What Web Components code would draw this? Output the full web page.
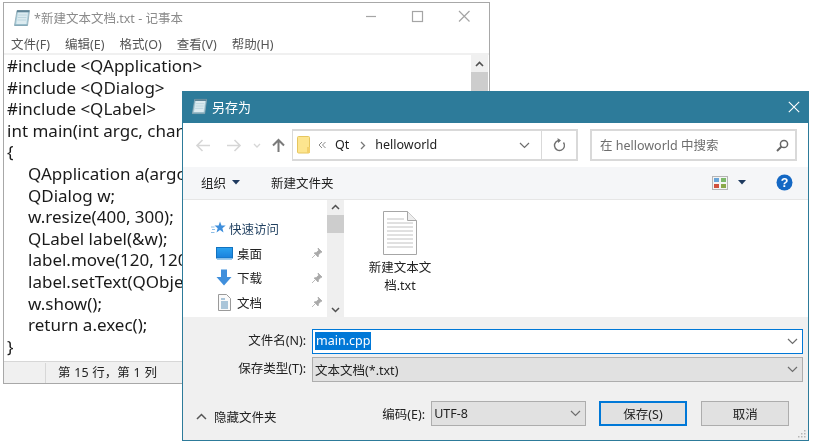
<!DOCTYPE html>
<html lang="zh">
<head>
<meta charset="utf-8">
<title>记事本</title>
<style>
html, body { margin: 0; padding: 0; background: #fff; }
body { width: 813px; height: 443px; overflow: hidden; position: relative; font-family: "Noto Sans", "Noto Sans CJK SC", sans-serif; }
note-pad, save-dialog { filter: blur(.35px); }
</style>
</head>
<body>
<note-pad></note-pad>
<save-dialog></save-dialog>

<script>
const notepadIcon = (w, h) => `
  <svg width="${w}" height="${h}" viewBox="0 0 18 18">
    <path d="M4 1.500h12.500L14.500 16.500H1.500z" fill="#a9cfdd" stroke="#8fa8b2" stroke-width=".8"/>
    <path d="M5 3.200h10L13.300 15.200H3.200z" fill="#dcebf0"/>
    <path d="M4.200 1.200h12.300l-.3 2H3.900z" fill="#5f8496"/>
    <path d="M5.200 6h8.600M4.800 8.500h8.600M4.400 11h8.600" stroke="#b4d0da" stroke-width=".8"/>
    <path d="M1.500 16.800h12.800l.3-1.400H1.800z" fill="#7fa4b4"/>
  </svg>`;

const chevronDown = `<svg width="11" height="7" viewBox="0 0 11 7"><path d="M1 1l4.500 4.500L10 1" fill="none" stroke="#6d6d6d" stroke-width="1.200"/></svg>`;

class NotePad extends HTMLElement {
  connectedCallback() {
    this.attachShadow({ mode: 'open' });
    // only what shows beside the dialog
    const lines = [
      '#include &lt;QApplication&gt;', '#include &lt;QDialog&gt;', '#include &lt;QLabel&gt;',
      'int main(int argc, char', '{',
      '>QApplication a(argc', '>QDialog w;', '>w.resize(400, 300);',
      '>QLabel label(&amp;w);', '>label.move(120, 120',
      '>label.setText(QObje', '>w.show();',
      '>return a.exec();', '}'
    ].map(l => l.replace(/^>/, '<span class="in"></span>'));
    this.shadowRoot.innerHTML = `
      <style>
        :host { position: absolute; left: 3px; top: 2px; width: 487px; height: 382px; box-sizing: border-box;
          display: flex; flex-direction: column; background: #fff; border: 1px solid #a8a8a8; }
        .title { height: 30px; box-sizing: border-box; padding-bottom: 1px; flex: none; display: flex; align-items: center; padding-left: 9px; font-size: 12.500px; color: #8b8b8b; }
        .title span { margin-left: 3px; flex: 1; }
        .ctl svg { display: block; }
        .menu { height: 20px; flex: none; display: flex; gap: 15px; padding-left: 7px; align-items: center; font-size: 12.500px; color: #555; border-bottom: 2px solid #f0f0f0; }
        .body { flex: 1; display: flex; min-height: 0; }
        pre { flex: 1; margin: 0; padding: 0 0 0 3px; font: 17px/21.600px "Noto Sans", "Noto Sans CJK SC", sans-serif; color: #1a1a1a; overflow: hidden; }
        .in { display: inline-block; width: 21px; }
        .sb { width: 17px; flex: none; margin-right: 1px; background: #f0f0f0; display: flex; flex-direction: column; align-items: center; }
        .sb svg { margin-top: 6px; flex: none; }
        .sb i { display: block; width: 100%; height: 40px; margin-top: 5px; background: #cdcdcd; }
        .status { height: 22px; box-sizing: border-box; padding-top: 1px; flex: none; display: flex; align-items: center; background: #f0f0f0; border-top: 1px solid #d7d7d7; font-size: 12.500px; color: #222; }
        .status b { font-weight: 400; margin-left: 41px; padding-left: 12px; border-left: 1px solid #d7d7d7; line-height: 20px; word-spacing: .5px; }
      </style>
      <div class="title">${notepadIcon(18, 18)}<span>*新建文本文档.txt - 记事本</span>
        <div class="ctl">
          <svg width="125" height="20" viewBox="0 0 125 20" fill="none" stroke="#a5a5a5" stroke-width="1.200">
            <path d="M2 8.500h10"/>
            <rect x="48.500" y="3.500" width="10" height="10"/>
            <path d="M95 3l10.500 10.500M105.500 3L95 13.500"/>
          </svg>
        </div>
      </div>
      <div class="menu"><span>文件(F)</span><span>编辑(E)</span><span>格式(O)</span><span>查看(V)</span><span>帮助(H)</span></div>
      <div class="body">
        <pre>${lines.join('\n')}</pre>
        <div class="sb">
          <svg width="9" height="6" viewBox="0 0 9 6"><path d="M1 5l3.500-3.500L8 5" fill="none" stroke="#505050" stroke-width="1.600"/></svg>
          <i></i>
        </div>
      </div>
      <div class="status"><b>第 15 行，第 1 列</b></div>`;
  }
}

class NavItem extends HTMLElement {
  connectedCallback() {
    this.attachShadow({ mode: 'open' });
    const pinned = this.hasAttribute('pinned');
    this.shadowRoot.innerHTML = `
      <style>
        :host { display: flex; align-items: center; height: 24.500px; font-size: 12.500px; color: #222; }
        .ic { width: 21px; padding-left: 3px; flex: none; display: flex; }
        .tx { flex: 1; }
        .pin { width: 12px; flex: none; }
      </style>
      <span class="ic"><slot name="icon"></slot></span>
      <span class="tx"><slot></slot></span>
      ${pinned ? `<svg class="pin" width="12" height="12" viewBox="0 0 12 12"><path d="M7 1l4 4-1.200.500-2.300 2.300-.400 2.200-4-4 2.200-.400L7.600 3.300z M4 8l-3 3" fill="#a9a9a9" stroke="#a9a9a9" stroke-width=".8"/></svg>` : ''}`;
  }
}

class FormCombo extends HTMLElement {
  connectedCallback() {
    this.attachShadow({ mode: 'open' });
    this.shadowRoot.innerHTML = `
      <style>
        :host { display: flex; align-items: center; box-sizing: border-box; height: 25px; background: #e1e1e1; border: 1px solid #adadad; padding: 0 4px 1px 2px; font-size: 12.500px; color: #222; }
        :host([active]) { background: #fff; border-color: #0078d7; }
        .v { flex: 1; }
        svg { flex: none; }
      </style>
      <span class="v"><slot></slot></span>${chevronDown}`;
  }
}

class DlgButton extends HTMLElement {
  connectedCallback() {
    this.attachShadow({ mode: 'open' });
    this.shadowRoot.innerHTML = `
      <style>
        :host { display: flex; align-items: center; justify-content: center; box-sizing: border-box; height: 25px; width: 88px; background: #e1e1e1; border: 1px solid #adadad; font-size: 12.500px; color: #222; }
        :host([primary]) { border: 2px solid #0078d7; width: 89px; }
      </style>
      <slot></slot>`;
  }
}

class SaveDialog extends HTMLElement {
  connectedCallback() {
    this.attachShadow({ mode: 'open' });
    this.shadowRoot.innerHTML = `
      <style>
        :host { position: absolute; left: 182px; top: 91px; width: 627px; height: 350px; box-sizing: border-box;
          display: flex; flex-direction: column; background: #f0f0f0; border: 1px solid #2d7b9a; border-top: 0; font-size: 12.500px; color: #222; }
        .title { height: 32px; box-sizing: border-box; flex: none; background: #2d7b9a; color: #fff; display: flex; align-items: center; padding: 0 0 1px 9px; margin: 0 -1px; font-size: 13px; }
        .title span { margin-left: 4px; flex: 1; }
        .title svg.x { margin-right: 9px; }
        .nav { height: 44px; flex: none; background: #fff; display: flex; align-items: center; padding: 0 12px 0 11px; box-sizing: border-box; }
        .arrows { width: 98px; flex: none; display: flex; align-items: center; }
        .addr { width: 286px; height: 32px; box-sizing: border-box; flex: none; border: 1px solid #d9d9d9; border-width: 2px 2px 2px 1px; display: flex; align-items: center; padding-left: 4px; }
        .addr .txt { position: relative; top: -1px; }
        .addr .fill { flex: 1; }
        .addr .dd { width: 34px; height: 100%; display: flex; align-items: center; justify-content: center; }
        .addr .rf { width: 34px; height: 100%; border-left: 1px solid #d9d9d9; display: flex; align-items: center; justify-content: center; }
        .search { width: 207px; height: 32px; box-sizing: border-box; margin-left: 12px; flex: none; border: 2px solid #d9d9d9; display: flex; align-items: center; padding: 0 6px 0 8px; color: #6d6d6d; }
        .search span { flex: 1; position: relative; top: -1px; }
        .tools { height: 33px; flex: none; box-sizing: border-box; background: #f5f6f8; border-bottom: 1px solid #e6e6e6; display: flex; align-items: center; padding: 0 15px 1px 18px; }
        .tools svg { flex: none; }
        .tools .new { margin-left: 30px; flex: 1; }
        .main { height: 117px; flex: none; background: #fff; display: flex; }
        .tree { width: 144px; flex: none; box-sizing: border-box; padding: 16px 4px 0 28px; }
        .quick { display: flex; align-items: center; height: 24px; margin-bottom: 1px; }
        .quick span { margin-left: 3px; color: #1f3f5f; }
        nav-item { margin-left: 2px; }
        .sb { width: 17px; flex: none; background: #efefef; display: flex; flex-direction: column; align-items: center; }
        .sb i { width: 100%; height: 18px; background: #cdcdcd; margin-top: 5px; }
        .sb svg { flex: none; margin-top: 4px; }
        .sb svg:last-child { margin-top: auto; margin-bottom: 4px; }
        .files { flex: 1; padding: 11px 0 0 23px; }
        .file { width: 66px; display: flex; flex-direction: column; align-items: center; text-align: center; line-height: 18px; }
        .file svg { margin-bottom: 4px; }
        .form { flex: 1; position: relative; padding: 12px 5px 0 0; display: flex; flex-direction: column; }
        .row { display: grid; grid-template-columns: 123px 1fr; column-gap: 6px; height: 28px; align-items: start; }
        .row label { text-align: right; line-height: 23px; white-space: nowrap; }
        .sel { display: inline-block; background: #0078d7; color: #fff; line-height: 18px; padding: 0 1px; }
        .foot { display: flex; align-items: center; padding-left: 13px; margin-top: 16px; }
        .foot > svg, .foot .hide { margin-top: 6px; }
        .foot .hide { margin-left: 7px; width: 169px; }
        .foot .enc { width: 44px; margin-right: 5px; white-space: nowrap; }
        .foot form-combo { width: 155px; margin-right: 13px; }
        .foot dlg-button { margin-right: 14px; }
        .grip { position: absolute; right: 2px; bottom: 2px; }
      </style>
      <div class="title">${notepadIcon(17, 17)}<span>另存为</span>
        <svg class="x" width="12" height="12" viewBox="0 0 12 12"><path d="M.8.8l10.400 10.400M11.200.8L.8 11.200" stroke="#fff" stroke-width="1.100" fill="none"/></svg>
      </div>
      <div class="nav">
        <div class="arrows">
          <svg width="98" height="20" viewBox="0 0 98 20" fill="none">
            <path d="M3 10.500h13M8.500 5l-5.500 5.500L8.500 16" stroke="#d6d6d6" stroke-width="1.600"/>
            <path d="M33 10.500h13M40.500 5l5.500 5.500L40.500 16" stroke="#d6d6d6" stroke-width="1.600"/>
            <path d="M60 9l3 3 3-3" stroke="#d6d6d6" stroke-width="1.300"/>
            <path d="M84.500 17V5M79 10.500l5.500-5.500 5.500 5.500" stroke="#7a7a7a" stroke-width="2"/>
          </svg>
        </div>
        <div class="addr">
          <svg width="14" height="18" viewBox="0 0 14 18"><rect x=".5" y=".5" width="12" height="16.500" rx="1" fill="#fde58f" stroke="#e6c65f"/><rect x="10" y="11" width="3" height="6" fill="#f3d06b"/></svg>
          <svg width="8" height="8" viewBox="0 0 8 8" style="margin-left:7px" fill="none" stroke="#8a8a8a"><path d="M4 1L1 4l3 3M7.500 1l-3 3 3 3"/></svg>
          <span class="txt" style="margin-left:9px">Qt</span>
          <svg width="6" height="9" viewBox="0 0 6 9" style="margin-left:11px"><path d="M1 1l3.500 3.500L1 8" fill="none" stroke="#777" stroke-width="1.300"/></svg>
          <span class="txt" style="margin-left:9px">helloworld</span>
          <span class="fill"></span>
          <span class="dd">${chevronDown}</span>
          <span class="rf"><svg width="13" height="14" viewBox="0 0 13 14" fill="none"><path d="M10.500 4.500a5 5 0 1 1-3.500-2" stroke="#6f6f6f" stroke-width="1.400"/><path d="M4.500 0l3.500 2.500-3 2.500z" fill="#6f6f6f"/></svg></span>
        </div>
        <div class="search"><span>在 helloworld 中搜索</span>
          <svg width="13" height="13" viewBox="0 0 13 13" fill="none"><circle cx="8" cy="5" r="3.600" stroke="#666" stroke-width="1.500"/><path d="M5.500 7.500L1 12" stroke="#666" stroke-width="2"/></svg>
        </div>
      </div>
      <div class="tools">
        <span>组织</span>
        <svg width="9" height="5" viewBox="0 0 9 5" style="margin-left:6px"><path d="M0 0h8l-4 4.500z" fill="#1e3a5f"/></svg>
        <span class="new">新建文件夹</span>
        <svg width="16" height="14" viewBox="0 0 16 14"><rect x=".5" y=".5" width="15" height="13" fill="#f4f4f4" stroke="#b5b5b5"/><rect x="2" y="2" width="5" height="4" fill="#6aa5d8"/><rect x="9" y="2" width="5" height="4" fill="#7cb86a"/><rect x="2" y="8" width="5" height="4" fill="#d0503c"/><rect x="9" y="8" width="5" height="4" fill="#8aa84a"/></svg>
        <svg width="9" height="5" viewBox="0 0 9 5" style="margin-left:10px"><path d="M0 0h8l-4 4.500z" fill="#1e3a5f"/></svg>
        <svg width="17" height="17" viewBox="0 0 17 17" style="margin-left:29px"><circle cx="8.500" cy="8.500" r="8" fill="#1468c4"/><text x="8.500" y="13" text-anchor="middle" font-family="Liberation Sans" font-weight="700" font-size="12.500" fill="#fff">?</text></svg>
      </div>
      <div class="main">
        <div class="tree">
          <div class="quick">
            <svg width="15" height="14" viewBox="0 0 15 14"><path d="M9 .5l1.500 3.900 4.200.2-3.300 2.700 1.100 4.200-3.500-2.400-3.500 2.400 1.200-4.200L3.500 4.600h4.100z" fill="#3f8fdc"/><path d="M0 6h3.500M1 8.500h3M0 11.500h3.500" stroke="#8dbde6" stroke-width="1.200"/></svg>
            <span>快速访问</span>
          </div>
          <nav-item pinned><svg slot="icon" width="17" height="13" viewBox="0 0 17 13"><defs><linearGradient id="d" x1="0" y1="0" x2="0" y2="1"><stop offset="0" stop-color="#2aa3f0"/><stop offset="1" stop-color="#1a80dc"/></linearGradient></defs><rect x=".5" y=".5" width="16" height="10.500" fill="url(#d)" stroke="#1272bf"/><rect x="1" y="11" width="15" height="1.800" fill="#8abfe8"/></svg>桌面</nav-item>
          <nav-item pinned><svg slot="icon" width="16" height="17" viewBox="0 0 16 17"><path d="M5 .5h6v7.500h4.500L8 16.500.5 8H5z" fill="#3f8fdc"/></svg>下载</nav-item>
          <nav-item pinned><svg slot="icon" width="13" height="17" viewBox="0 0 13 17" style="margin-left:2px"><path d="M.5.500h8l4 4v12H.5z" fill="#fafafa" stroke="#9a9a9a"/><path d="M3 5h4M3 8h7M3 10h7M3 12h7M3 14h7" stroke="#5a90b8" stroke-width="1"/></svg>文档</nav-item>
        </div>
        <div class="sb">
          <svg width="9" height="6" viewBox="0 0 9 6"><path d="M1 5l3.500-3.500L8 5" fill="none" stroke="#505050" stroke-width="1.500"/></svg>
          <i></i>
          <svg width="9" height="6" viewBox="0 0 9 6"><path d="M1 1l3.500 3.500L8 1" fill="none" stroke="#505050" stroke-width="1.500"/></svg>
        </div>
        <div class="files">
          <div class="file">
            <svg width="34" height="44" viewBox="0 0 34 44"><path d="M.5.500h24l9 9v34H.5z" fill="#fff" stroke="#a6a6a6"/><path d="M24.500.500v9h9" fill="#eee" stroke="#a6a6a6"/><path d="M4 8h17M4 12h26M4 16h26M4 20h26M4 24h26M4 28h26M4 32h26M4 36h26" stroke="#c2c2c2" stroke-width="1"/></svg>
            <span>新建文本文档.txt</span>
          </div>
        </div>
      </div>
      <div class="form">
        <div class="row"><label>文件名(N):</label><form-combo active><span class="sel">main.cpp</span></form-combo></div>
        <div class="row"><label>保存类型(T):</label><form-combo>文本文档(*.txt)</form-combo></div>
        <div class="foot">
          <svg width="11" height="7" viewBox="0 0 11 7"><path d="M1 6l4.500-4.500L10 6" fill="none" stroke="#555" stroke-width="1.500"/></svg>
          <span class="hide">隐藏文件夹</span>
          <span class="enc">编码(E):</span>
          <form-combo>UTF-8</form-combo>
          <dlg-button primary>保存(S)</dlg-button>
          <dlg-button>取消</dlg-button>
        </div>
        <svg class="grip" width="8" height="8" viewBox="0 0 8 8" fill="#b5b5b5"><rect x="6" y="0" width="1.500" height="1.500"/><rect x="3" y="3" width="1.500" height="1.500"/><rect x="6" y="3" width="1.500" height="1.500"/><rect x="0" y="6" width="1.500" height="1.500"/><rect x="3" y="6" width="1.500" height="1.500"/><rect x="6" y="6" width="1.500" height="1.500"/></svg>
      </div>`;
  }
}

customElements.define('nav-item', NavItem);
customElements.define('form-combo', FormCombo);
customElements.define('dlg-button', DlgButton);
customElements.define('note-pad', NotePad);
customElements.define('save-dialog', SaveDialog);
</script>
</body>
</html>
